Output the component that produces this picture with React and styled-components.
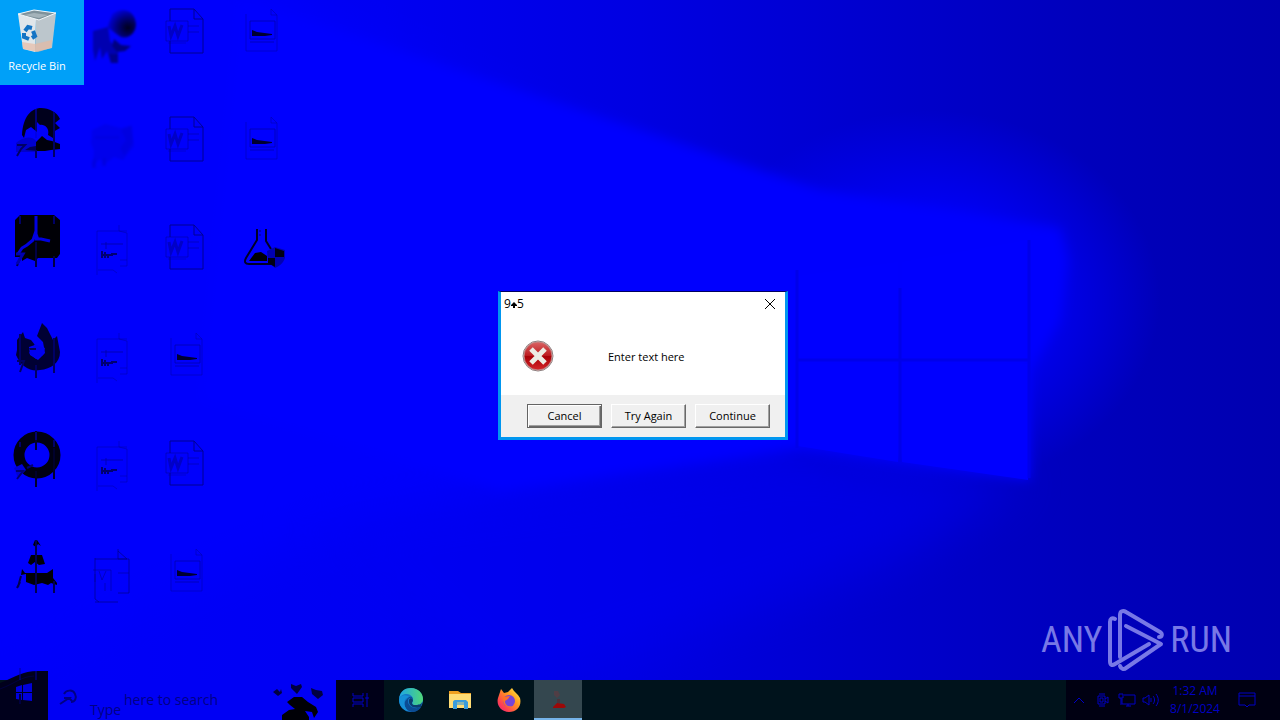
import React from "react";
import styled, { createGlobalStyle } from "styled-components";

const Global = createGlobalStyle`
  *, *::before, *::after { box-sizing: border-box; }
  html, body, #root { margin: 0; height: 100%; }
  body { font-family: "Open Sans", "Noto Sans", sans-serif; font-size: 11px; line-height: 16px; overflow: hidden; background: #0000f8; }
  button, input { font: inherit; color: inherit; }
`;

const Screen = styled.div`
  position: relative;
  isolation: isolate;
  display: flex;
  flex-direction: column;
  min-height: 100vh;
`;

const Wallpaper = styled.svg`
  position: absolute;
  inset: 0;
  z-index: -1;
  width: 100%;
  height: 100%;
`;

const Desktop = styled.main`
  position: relative;
  flex: 1;
  display: flex;
`;

const IconGrid = styled.ul`
  display: grid;
  grid-auto-flow: column;
  grid-template-rows: repeat(6, 108px);
  grid-auto-columns: 75px;
  margin: 0;
  padding: 0;
  list-style: none;
`;

const Shortcut = styled.button`
  display: flex;
  flex-direction: column;
  align-items: flex-start;
  width: ${(p) => (p.$selected ? "84px" : "75px")};
  height: 85px;
  padding: 0;
  border: 0;
  background: ${(p) => (p.$selected ? "#00a0f8" : "transparent")};
  color: #fff;

  svg { flex: none; width: 75px; height: 58px; overflow: visible; }
`;

const ShortcutLabel = styled.span`
  width: 74px;
  text-align: center;
`;

const Watermark = styled.div`
  position: absolute;
  right: 48px;
  bottom: 8px;
  display: flex;
  align-items: center;
  gap: 4px;
  color: #7878e6;
  font-family: "Roboto Condensed", "Open Sans Condensed", "Liberation Sans Narrow", "Roboto", sans-serif;
  font-size: 36px;
  font-weight: 400;
  line-height: 64px;

  svg { width: 60px; height: 64px; }
`;

const Dialog = styled.section`
  position: absolute;
  left: calc(50% - 142px);
  top: 291px;
  display: flex;
  flex-direction: column;
  width: 290px;
  height: 149px;
  border: 3px solid #0096f0;
  border-top: 1px solid #000060;
  outline: 0;
  background: #fff;
  color: #000;
`;

const TitleBar = styled.header`
  display: flex;
  align-items: center;
  justify-content: space-between;
  height: 24px;
  padding: 0 8px 0 3px;
`;

const Title = styled.h1`
  display: flex;
  align-items: center;
  margin: 0;
  font-size: 12px;
  font-weight: 400;

  svg { width: 6px; height: 6px; margin-top: 2px; }
`;

const CloseButton = styled.button`
  display: flex;
  align-items: center;
  justify-content: center;
  width: 14px;
  height: 16px;
  padding: 0;
  border: 0;
  background: none;

  svg { width: 12px; height: 12px; }
`;

const Message = styled.div`
  flex: 1;
  display: flex;
  align-items: center;
  gap: 54px;
  padding: 0 0 0 21px;

  svg { width: 32px; height: 32px; }
  p { margin: 2px 0 0; }
`;

const Actions = styled.footer`
  display: flex;
  align-items: center;
  justify-content: flex-end;
  gap: 9px;
  height: 42px;
  padding: 0 15px 0 0;
  background: #f0f0f0;
`;

const ActionButton = styled.button`
  width: 75px;
  height: 24px;
  padding: 0;
  border: 1px solid;
  border-color: ${(p) => (p.$primary ? "#646464" : "#fff #696969 #696969 #fff")};
  background: #f0f0f0;
  box-shadow: ${(p) =>
    p.$primary
      ? "inset 1px 1px #fff, inset -1px -1px #696969, inset -2px -2px #a0a0a0"
      : "inset -1px -1px #a0a0a0"};
`;

const Taskbar = styled.nav`
  display: flex;
  height: 40px;
  background: #00131c;
`;

const StartButton = styled.button`
  position: relative;
  width: 48px;
  padding: 0;
  border: 0;
  background: none;

  svg { position: absolute; left: 0; bottom: 0; width: 48px; height: 52px; }
`;

const Search = styled.label`
  position: relative;
  display: flex;
  align-items: center;
  width: 288px;
  background: #0000f4;
  color: #000084;
`;

const SearchIcon = styled.svg`
  flex: none;
  width: 36px;
  height: 40px;
`;

const SearchInput = styled.input`
  width: 150px;
  padding: 0;
  border: 0;
  outline: 0;
  background: none;
  font-size: 14px;

  &::placeholder { color: #000084; opacity: 1; }
`;

const SearchWord = styled.span`
  align-self: flex-end;
  width: 40px;
  padding: 0 0 0 6px;
  font-size: 14px;
  line-height: 20px;
`;

const Paw = styled.svg`
  position: absolute;
  right: 0;
  bottom: 0;
  width: 66px;
  height: 40px;
`;

const TaskButton = styled.button`
  display: flex;
  align-items: center;
  justify-content: center;
  width: 48px;
  padding: 0;
  border: 0;
  border-bottom: 2px solid ${(p) => (p.$active ? "#76b4ea" : "transparent")};
  background: ${(p) => (p.$active ? "#34474f" : p.$dark ? "#000018" : "transparent")};

  svg { width: 26px; height: 26px; margin-top: 2px; }
`;

const AppButtons = styled.div`
  display: flex;
  flex: 1;
  padding-left: 3px;
  gap: 1px;
`;

const Tray = styled.div`
  display: flex;
  align-items: center;
  gap: 4px;
  width: 214px;
  padding-left: 3px;
  background: #000012;
  color: #0000c4;
`;

const TrayButton = styled.button`
  display: flex;
  padding: 0;
  border: 0;
  background: none;

  svg { width: 20px; height: 20px; }
`;

const Clock = styled.time`
  width: 60px;
  text-align: center;
  font-size: 12px;
  line-height: 18px;
  white-space: pre-line;
`;

const NoticeButton = styled(TrayButton)`
  margin-left: 8px;
`;

function BlueWallpaper() {
  return (
    <Wallpaper viewBox="0 0 1280 720" preserveAspectRatio="none" aria-hidden="true">
      <defs>
        <linearGradient id="edge" x1="0" x2="1" y1="0" y2="0">
          <stop offset="0" stopColor="#0000fa" />
          <stop offset="0.3" stopColor="#0000f2" />
          <stop offset="0.5" stopColor="#0000e2" />
          <stop offset="0.7" stopColor="#0000cc" />
          <stop offset="0.85" stopColor="#0000bc" />
          <stop offset="1" stopColor="#0000b0" />
        </linearGradient>
        <radialGradient id="glow">
          <stop offset="0" stopColor="#0000ff" />
          <stop offset="0.4" stopColor="#0000ff" stopOpacity="0.9" />
          <stop offset="1" stopColor="#0000ff" stopOpacity="0" />
        </radialGradient>
        <filter id="soft" x="-10%" y="-10%" width="120%" height="120%">
          <feGaussianBlur stdDeviation="6" />
        </filter>
        <filter id="wide" x="-30%" y="-30%" width="160%" height="160%">
          <feGaussianBlur stdDeviation="24" />
        </filter>
      </defs>
      <rect width="1280" height="720" fill="url(#edge)" />
      <ellipse cx="930" cy="300" rx="230" ry="190" fill="url(#glow)" />
      <path d="M-60 -60H200L400 60L700 200L800 440L600 470L300 540L-60 700z" fill="#0000fc" filter="url(#wide)" />
      <path d="M300 520L800 450L1026 480L900 560L500 700z" fill="#0000f4" opacity=".5" filter="url(#wide)" />
      <path d="M240 0L640 130L820 190L1000 220L1060 228L1068 260L1060 320L1030 370V480L800 448L500 490L200 400z" fill="#0000fe" filter="url(#soft)" />
      <path d="M798 276L898 262V356H798zM902 262L1028 240V358H902zM798 364H898V462L798 446zM902 364H1028V480L902 462z" fill="#0000ff" />
      <path d="M797 270V448M900 288V462M1029 240V478M798 360H1028" stroke="#0000ea" strokeWidth="3" />
    </Wallpaper>
  );
}

const RecycleBin = () => (
  <svg viewBox="0 0 75 58">
    <path d="M18 14L36 19L35 52L23 49z" fill="#e0e6ea" />
    <path d="M36 19L56 13L52 48L35 52z" fill="#bcc6cc" />
    <path d="M22 42L35 44L52 40L51 48L38 52L23 49z" fill="#e8b8a0" opacity=".65" />
    <path d="M18 14L34 10L56 13L39 20z" fill="#7f929b" stroke="#f4f8fa" strokeWidth="1" />
    <path d="M24 15L34 13L48 15L39 18z" fill="#a4b3ba" />
    <g fill="none" stroke="#1474c4" strokeWidth="4">
      <path d="M25 31L28 27L32 28M33 31L35 36L32 38M29 39L24 37L24 33" />
    </g>
  </svg>
);

const DarkGlobe = () => (
  <svg viewBox="0 0 75 58">
    <defs>
      <radialGradient id="orb" cx=".72" cy=".65" r=".75">
        <stop offset="0" stopColor="#000018" />
        <stop offset=".5" stopColor="#000078" />
        <stop offset="1" stopColor="#0000e8" />
      </radialGradient>
      <filter id="fuzz"><feGaussianBlur stdDeviation="1" /></filter>
    </defs>
    <g filter="url(#fuzz)">
      <path d="M37 14C47 6 60 10 61 24C61 33 54 39 46 37C40 34 38 30 32 28z" fill="url(#orb)" />
      <path d="M18 31L33 27L35 41L43 50V63H36L32 51L27 59L25 47L20 61L18 50z" fill="#0000b0" />
      <path d="M39 39L46 45L56 46L50 51L42 52L37 46z" fill="#000080" />
      <path d="M34 54H43V63H36z" fill="#00008c" />
    </g>
  </svg>
);

const FaintGlobe = () => (
  <svg viewBox="0 0 75 58" opacity=".5">
    <g fill="#0000bd" filter="url(#fuzz)">
      <path d="M17 22L30 16L46 20L57 17L59 38L48 52L39 49L30 56L25 51L17 59L19 43L16 35z" opacity=".5" />
      <path d="M17 53L21 50V60H17zM27 51L31 49V58H27zM46 22L56 18L58 35L49 48L45 40L51 32z" opacity=".7" />
      <path d="M20 28H44V31H20z" opacity=".6" />
    </g>
  </svg>
);

const DarkArc = () => (
  <svg viewBox="0 0 75 58">
    <path d="M22 27C23 9 31 0 41 0C49 0 57 4 60 11L55 15L60 20L53 24V30L48 27C50 20 44 16 40 17L37 14V24L31 19L26 22L24 30z" fill="#00001c" />
    <path d="M36 34L42 28L47 32L52 33L60 36V41L51 42L45 43H38L25 42L30 39L36 38z" fill="#00000c" />
    <path d="M16 35C22 29 32 27 36 33V44H16z" fill="#0000a0" opacity=".5" />
    <path d="M17 37H25L21 41L17 48M36 42V50M54 4V49" stroke="#000064" strokeWidth="2" fill="none" />
    <path d="M36 1V30" stroke="#0000d2" />
  </svg>
);

const AcroTile = () => (
  <svg viewBox="0 0 75 58">
    <path d="M20 -1H54L60 4V38L57 42H38L35 45L27 42L22 45V41H15V4z" fill="#000006" />
    <path d="M36 0V18M36 15L33 24L27 29L22 32L18 38M35 23L41 23L50 25M36 18L38 24" fill="none" stroke="#0000e0" strokeWidth="3" />
    <path d="M20 0V8M54 0V8" stroke="#0000c4" />
    <path d="M36 26V51M54 40V51M20 42L17 50" stroke="#000044" strokeWidth="2" />
    <path d="M16 38H23L17 48" fill="none" stroke="#0000b0" strokeWidth="3" />
  </svg>
);

const FireRing = () => (
  <svg viewBox="0 0 75 58">
    <path d="M17 26L17 16L23 8L25 14L31 16L35 21L29 23L30 31L38 36L45 29L43 18L37 12L42 -1L47 4L53 16L57 12L60 28C60 39 51 45 40 46C31 48 21 43 16 31z" fill="#000034" />
    <path d="M35 20L45 24L43 31L36 35L29 29z" fill="#0000f0" />
    <path d="M29 24H36V26H30z" fill="#00005c" />
    <path d="M20 10V41M54 14V49M36 41V54M17 37H24L20 48" stroke="#000064" strokeWidth="2" fill="none" />
  </svg>
);

const PowerRing = () => (
  <svg viewBox="0 0 75 58">
    <circle cx="37" cy="23" r="18" fill="none" stroke="#000012" strokeWidth="11" />
    <path d="M36 -1V18M36 39V55M54 16V47" stroke="#00002c" strokeWidth="2" />
    <path d="M36 0V8M20 10V15M54 8V15" stroke="#0000c0" strokeWidth="1" />
    <path d="M14 36L22 32L26 38L18 46z" fill="#0000d8" />
    <path d="M16 39H23L17 47M27 36L33 33" fill="none" stroke="#000074" strokeWidth="2" />
  </svg>
);

const Cone = () => (
  <svg viewBox="0 0 75 58">
    <path d="M35 0L37 0L41 6L38 4L36 7L33 5zM31 15H42L45 24L39 25L35 22L31 25L28 23zM22 29L25 33H47L53 29L53 38L57 43V45L51 43L48 45L42 43L34 45L26 42V34L21 35z" fill="#000006" />
    <path d="M36 0V53M54 41V53M21 36L18 47M20 42L17 48" stroke="#000050" strokeWidth="2" />
  </svg>
);

const WordDoc = () => (
  <svg viewBox="0 -8 75 58" fill="none" stroke="#000092">
    <path d="M20 13V1H44L53 11V45H20V33M44 1V11H53" />
    <path d="M16 13H38V33H16zM38 18H49M38 24H49" strokeOpacity=".5" />
    <path d="M19 18L21 28L25 18L28 28L32 17" strokeWidth="3" strokeOpacity=".5" />
    <path d="M18 35H36" strokeOpacity=".35" />
  </svg>
);

const PictureDoc = ({ broken }) => (
  <svg viewBox="0 -8 75 58" fill="none" stroke="#0000a4">
    {broken ? (
      <>
        <path d="M22 7H44L52 9V42H45M22 7V51M44 1V7H52" strokeOpacity=".5" />
        <path d="M26 20H48M31 18V25" strokeOpacity=".8" />
        <path d="M27 27V34M30 28V34M33 30V34M36 30H42M26 31H38" stroke="#000070" strokeWidth="2" />
        <path d="M45 36H52M23 46H38L42 49" strokeOpacity=".5" />
      </>
    ) : (
      <>
        <path d="M21 6V43H52V7L46 1V7H52" strokeOpacity=".5" />
        <path d="M25 13H50V31H25zM25 34H49" strokeOpacity=".7" />
        <path d="M27 28V22L32 24L47 26V27L40 28z" fill="#000030" stroke="none" />
      </>
    )}
  </svg>
);

const BrokenDoc = () => (
  <svg viewBox="0 -8 75 58" fill="none" stroke="#000088">
    <path d="M20 54H43M20 10V51L24 54M20 11H54V45H43M43 1V11H52L43 3" strokeOpacity=".7" />
    <path d="M18 22H36V43M43 25H54M20 26V34M24 23L27 32L31 23M30 35V43" strokeOpacity=".5" />
  </svg>
);

const Flask = () => (
  <svg viewBox="0 -8 75 58">
    <path d="M32 5V16L21 34C19 38 20 40 24 40H50M41 5V17L46 25" fill="none" stroke="#000028" strokeWidth="2" />
    <path d="M34 7H36M34 11H36" stroke="#000080" />
    <path d="M24 37L30 29L36 28L42 32V37z" fill="#000004" />
    <path d="M42 27L50 23L60 26V34C58 40 54 42 50 44L43 38z" fill="#0000b0" />
    <path d="M50 24L59 27V33H50zM43 34H50V43L43 39z" fill="#000014" />
  </svg>
);

const shortcuts = [
  { name: "Recycle Bin", art: <RecycleBin />, label: true },
  { name: "Browser shortcut", art: <DarkArc /> },
  { name: "PDF reader", art: <AcroTile /> },
  { name: "Firefox", art: <FireRing /> },
  { name: "Power tool", art: <PowerRing /> },
  { name: "Media player", art: <Cone /> },
  { name: "Globe", art: <DarkGlobe /> },
  { name: "Faded globe", art: <FaintGlobe /> },
  { name: "Picture 1", art: <PictureDoc broken /> },
  { name: "Picture 2", art: <PictureDoc broken /> },
  { name: "Picture 3", art: <PictureDoc broken /> },
  { name: "Document 1", art: <BrokenDoc /> },
  { name: "Document 2", art: <WordDoc /> },
  { name: "Document 3", art: <WordDoc /> },
  { name: "Document 4", art: <WordDoc /> },
  { name: "Picture 4", art: <PictureDoc /> },
  { name: "Document 5", art: <WordDoc /> },
  { name: "Picture 5", art: <PictureDoc /> },
  { name: "Picture 6", art: <PictureDoc /> },
  { name: "Picture 7", art: <PictureDoc /> },
  { name: "Lab flask", art: <Flask /> },
];

const PlayMark = () => (
  <svg viewBox="0 0 60 64" fill="none" stroke="#7878e6" strokeWidth="4" strokeLinejoin="round" strokeLinecap="round">
    <path d="M9 11C6 9 4 11 4 14V53C4 57 6 58 9 56L43 36" />
    <path d="M14 49V7C14 3 17 2 20 4L54 24C57 26 56 29 53 29" />
    <path d="M20 18L55 36L20 60C18 62 15 61 14 58" />
  </svg>
);

const ErrorMark = () => (
  <svg viewBox="0 0 32 32" role="img" aria-label="Error">
    <defs>
      <linearGradient id="red" x1="0" y1="0" x2="0" y2="1">
        <stop offset="0" stopColor="#da6464" />
        <stop offset=".48" stopColor="#bd1c20" />
        <stop offset=".52" stopColor="#a80006" />
        <stop offset="1" stopColor="#d4262a" />
      </linearGradient>
    </defs>
    <circle cx="16" cy="16" r="15" fill="#f0e8e8" stroke="#8c8080" />
    <circle cx="16" cy="16" r="14" fill="url(#red)" stroke="#c08080" />
    <path d="M9 9L23 23M23 9L9 23" stroke="#ecece4" strokeWidth="5" />
  </svg>
);

const Edge = () => (
  <svg viewBox="0 0 26 26">
    <defs>
      <linearGradient id="edgeTop" x1="0" y1="0" x2="1" y2="0">
        <stop offset="0" stopColor="#1ca4e8" />
        <stop offset="1" stopColor="#50d878" />
      </linearGradient>
    </defs>
    <circle cx="13" cy="13" r="12" fill="#1478c8" />
    <path d="M1 12C2 4 7 1 13 1C20 1 25 6 25 12C25 17 21 18 17 18C14 18 14 16 15 14C16 10 12 7 9 7C5 7 2 9 1 12z" fill="url(#edgeTop)" />
    <path d="M9 12C4 16 7 24 14 25C19 25 22 22 23 20C18 23 9 20 10 13C11 10 14 10 15 13C15 10 12 8 9 12z" fill="#0b4c94" />
    <path d="M1 12C4 7 9 8 11 10C5 11 5 19 10 24C5 23 1 19 1 12z" fill="#1590d8" />
    <path d="M15 14C13 16 14 18 17 18C20 18 23 18 24 15L23 20C18 22 10 20 11 13C12 10 15 11 15 14z" fill="#0b3e70" />
  </svg>
);

const Folder = () => (
  <svg viewBox="0 0 26 26">
    <path d="M2 4H11L14 6H24V21H2z" fill="#f0a020" />
    <path d="M2 7H24V21H2z" fill="#ffdc74" />
    <path d="M6 22V15C6 14 7 13 8 13H19L21 15V22H17V18H10V22z" fill="#389cdc" />
    <path d="M10 15H17V18H10z" fill="#ffdc74" opacity=".4" />
  </svg>
);

const Firefox = () => (
  <svg viewBox="0 0 26 26">
    <defs>
      <linearGradient id="fox" x1="1" x2="0" y1="0" y2="1">
        <stop offset="0" stopColor="#fff44c" />
        <stop offset=".4" stopColor="#ff981e" />
        <stop offset=".75" stopColor="#ff4050" />
        <stop offset="1" stopColor="#e02084" />
      </linearGradient>
    </defs>
    <path d="M3 8L5 2L8 6L12 5L16 1C18 5 22 7 24 11C26 19 21 25 13 25C5 25 0 18 2 11z" fill="url(#fox)" />
    <circle cx="13" cy="14" r="6" fill="#7544d8" />
    <path d="M7 10L14 9L12 12L9 14C9 18 12 20 16 19C13 22 6 19 7 10z" fill="#ff7028" />
  </svg>
);

const RunningApp = () => (
  <svg viewBox="0 0 26 26">
    <path d="M9 4H13L15 8L12 11L9 8z" fill="#64383f" opacity=".6" />
    <path d="M8 20L12 16L19 17L21 20L19 21H8z" fill="#9c0808" />
    <path d="M12 12H15V16H12z" fill="#622028" opacity=".5" />
  </svg>
);

const TaskView = () => (
  <svg viewBox="0 0 26 26" fill="none" stroke="#0000c8">
    <path d="M6 6V9H16V6M6 20V17H16V20M6 11H16V15H6zM20 6V20M18 11H22" />
  </svg>
);

export default function App() {
  return (
    <Screen>
      <Global />
      <BlueWallpaper />
      <Desktop>
        <IconGrid>
          {shortcuts.map((s) => (
            <li key={s.name}>
              <Shortcut type="button" $selected={s.label} aria-label={s.name}>
                {s.art}
                {s.label && <ShortcutLabel>{s.name}</ShortcutLabel>}
              </Shortcut>
            </li>
          ))}
        </IconGrid>
        <Watermark>
          <span>ANY</span>
          <PlayMark />
          <span>RUN</span>
        </Watermark>
        <Dialog role="dialog" aria-labelledby="dialog-title">
          <TitleBar>
            <Title id="dialog-title">
              9
              <svg viewBox="0 0 6 6" aria-hidden="true"><path d="M3 0L6 3V4H4V6H2V4H0V3z" /></svg>
              5
            </Title>
            <CloseButton type="button" aria-label="Close">
              <svg viewBox="0 0 12 12"><path d="M1 1L11 11M11 1L1 11" stroke="#000" /></svg>
            </CloseButton>
          </TitleBar>
          <Message>
            <ErrorMark />
            <p>Enter text here</p>
          </Message>
          <Actions>
            <ActionButton type="button" $primary>Cancel</ActionButton>
            <ActionButton type="button">Try Again</ActionButton>
            <ActionButton type="button">Continue</ActionButton>
          </Actions>
        </Dialog>
      </Desktop>
      <Taskbar>
        <StartButton type="button" aria-label="Start">
          <svg viewBox="0 0 48 52">
            <path d="M0 15C16 9 22 3 38 3H48V52H0z" fill="#00001c" />
            <path d="M0 21C16 15 20 9 34 8" stroke="#000070" fill="none" opacity=".4" />
            <path d="M20 0V12M36 3V12" stroke="#0000a0" />
            <path d="M16 19L22 17V24H16zM23 17L32 15V24H23zM16 25H22V32L16 31zM23 25H32V33L23 32z" fill="#0000dc" />
            <path d="M20 26V36" stroke="#000040" strokeWidth="2" />
          </svg>
        </StartButton>
        <Search>
          <SearchIcon viewBox="0 0 36 40" fill="none" stroke="#000084" strokeWidth="2">
            <path d="M16 14C18 10 25 9 27 14C29 18 27 22 23 22M16 18H21L12 24M21 18L24 21" />
          </SearchIcon>
          <SearchWord>Type</SearchWord>
          <SearchInput type="text" placeholder="here to search" aria-label="Type here to search" />
          <Paw viewBox="0 0 66 40">
            <path d="M3 12L7 9L10 12L11 9L12 13L8 16zM21 4L26 6L31 4L32 7L27 14L21 8zM41 8L46 10L52 11L53 15L48 19L42 14z" fill="#000040" />
            <path d="M17 22L24 17L32 17L38 22L46 27L48 32L44 38L42 32L35 31L39 37V40H12V35L19 30L25 29L20 25z" fill="#000006" />
          </Paw>
        </Search>
        <TaskButton type="button" aria-label="Task view" $dark><TaskView /></TaskButton>
        <AppButtons>
          <TaskButton type="button" aria-label="Edge"><Edge /></TaskButton>
          <TaskButton type="button" aria-label="File Explorer"><Folder /></TaskButton>
          <TaskButton type="button" aria-label="Firefox"><Firefox /></TaskButton>
          <TaskButton type="button" aria-label="Running program" $active><RunningApp /></TaskButton>
        </AppButtons>
        <Tray>
          <TrayButton type="button" aria-label="Hidden icons">
            <svg viewBox="0 0 20 20" fill="none" stroke="currentColor"><path d="M5 13L10 8L15 13" /></svg>
          </TrayButton>
          <TrayButton type="button" aria-label="Meet now">
            <svg viewBox="0 0 20 20" fill="none" stroke="currentColor"><path d="M5 6H12V14H5zM12 9L15 7V13L12 11M6 4H12M6 16H12M7 8H10V12H7z" /></svg>
          </TrayButton>
          <TrayButton type="button" aria-label="Network">
            <svg viewBox="0 0 20 20" fill="none" stroke="currentColor"><path d="M7 5H18V14H5V9M2 4H6V8H2zM4 8V15M9 16H14M11 14V16" /></svg>
          </TrayButton>
          <TrayButton type="button" aria-label="Volume">
            <svg viewBox="0 0 20 20" fill="none" stroke="currentColor"><path d="M2 8H4L8 5V15L4 12H2zM10 8V12M12 6C14 8 14 12 12 14M15 4C18 8 18 12 15 16" /></svg>
          </TrayButton>
          <Clock>{"1:32 AM\n8/1/2024"}</Clock>
          <NoticeButton type="button" aria-label="Notifications">
            <svg viewBox="0 0 20 20" fill="none" stroke="currentColor"><path d="M2 3H18V15H12L10 17L8 15H2zM2 6H18" /></svg>
          </NoticeButton>
        </Tray>
      </Taskbar>
    </Screen>
  );
}
